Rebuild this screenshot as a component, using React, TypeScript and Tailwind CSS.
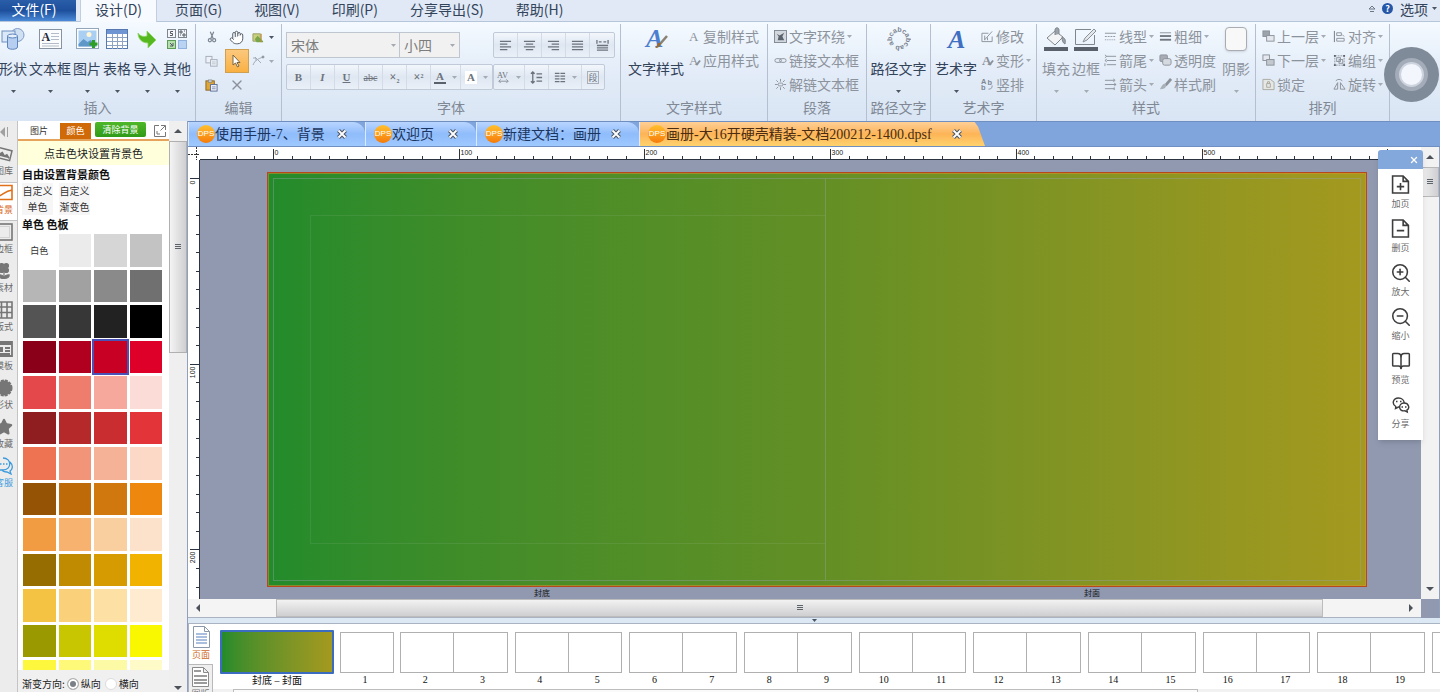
import React from "react";
import { Hand, X, ZoomIn, ZoomOut, BookOpen, Flower2, Star } from "lucide-react";

type Kids = { children?: React.ReactNode };

const MENU = ["页面(G)", "视图(V)", "印刷(P)", "分享导出(S)", "帮助(H)"];

const SWATCHES = [
  "#ffffff", "#ebebeb", "#d6d6d6", "#c3c3c3",
  "#b6b6b6", "#a1a1a1", "#8a8a8a", "#707070",
  "#545454", "#373737", "#222222", "#000000",
  "#8a0019", "#b1001f", "#c80024", "#df002a",
  "#e5484b", "#ef7d6d", "#f7a89c", "#fbdcd7",
  "#8e1e20", "#b6292b", "#c92d30", "#e33539",
  "#ee7353", "#f29477", "#f6b297", "#fcd9c6",
  "#955405", "#bf6a08", "#d0770d", "#ed870d",
  "#f19c42", "#f7b26f", "#f9cf9f", "#fce2ca",
  "#956d00", "#c08b00", "#d69b00", "#f2b300",
  "#f5c344", "#fad07a", "#fde1a4", "#feebd0",
  "#9a9a00", "#c8c600", "#dfdc00", "#f9f800",
  "#fdf83e", "#fef979", "#fdfaa6", "#fefbc8",
];
const SELECTED = 14;

function Svg({ s = 14, vb = 14, children, className = "" }: { s?: number; vb?: number; className?: string } & Kids) {
  return (
    <svg width={s} height={s} viewBox={`0 0 ${vb} ${vb}`} fill="none" stroke="#8b9199" className={`shrink-0 ${className}`} aria-hidden="true">
      {children}
    </svg>
  );
}

function Caret({ className = "text-[#4b5563]" }: { className?: string }) {
  return (
    <svg width="5" height="3" viewBox="0 0 5 3" className={`shrink-0 ${className}`} aria-hidden="true">
      <path d="M0 0h5L2.5 3z" fill="currentColor" />
    </svg>
  );
}

function Group({ label, width, children }: { label: string; width: string } & Kids) {
  return (
    <section className={`flex shrink-0 flex-col pt-[2px] ${width}`}>
      <div className="flex grow border-r border-[#b4c0cf]">
        <div className="flex min-w-0 grow flex-col">
          <div className="flex h-[72px]">{children}</div>
          <h2 className="text-center text-[14px] leading-[22px] text-[#7f8894]">{label}</h2>
        </div>
      </div>
    </section>
  );
}

function Big({ icon, label, caret = true, muted = false }: { icon: React.ReactNode; label: string; caret?: boolean; muted?: boolean }) {
  return (
    <button className={`flex shrink-0 flex-col items-center text-[14px] leading-5 ${muted ? "text-[#8d939c]" : "text-[#33435a]"}`}>
      <span className="flex h-[30px] items-center">{icon}</span>
      <span className="mt-1 whitespace-nowrap">{label}</span>
      {caret && <Caret className={muted ? "mt-3 text-[#a5abb3]" : "mt-3 text-[#4b5563]"} />}
    </button>
  );
}

function Small({ icon, label, caret = false }: { icon: React.ReactNode; label: string; caret?: boolean }) {
  return (
    <button className="flex h-6 items-center gap-[2px] whitespace-nowrap text-[14px] text-[#8d939c]">
      {icon}
      <span>{label}</span>
      {caret && <Caret className="text-[#a5abb3]" />}
    </button>
  );
}

function Tool({ label, width = "w-6", children, caret = false }: { label: string; width?: string; caret?: boolean } & Kids) {
  return (
    <button aria-label={label} className={`flex h-6 items-center justify-center gap-[6px] border-r border-[#d3dbe6] text-[#6d737c] last:border-r-0 ${width}`}>
      {children}
      {caret && <Caret className="text-[#a5abb3]" />}
    </button>
  );
}

function ToolBox({ children }: Kids) {
  return (
    <div className="flex rounded-[2px] border border-[#c0cad8] bg-linear-to-b from-[#f3f7fc] via-[#dfe7f2] to-[#eaf0f8]">{children}</div>
  );
}

/* ---------- ribbon icons ---------- */

const ShapeIcon = () => (
  <Svg s={24} vb={24}>
    <circle cx="16.500" cy="8" r="6.500" fill="#cfe0f3" stroke="#7f9cc6" />
    <rect x="1" y="4" width="13" height="11" fill="#dbe8f7" stroke="#6f90bf" />
    <path d="M6.500 9v11c0 3 10 3 10 0V9z" fill="#b6cff0" stroke="#5d84bd" />
    <ellipse cx="11.500" cy="9" rx="5" ry="2" fill="#e6f0fb" stroke="#5d84bd" />
  </Svg>
);
const TextBoxIcon = () => (
  <svg width="23" height="20" viewBox="0 0 23 20" aria-hidden="true">
    <rect x=".5" y=".5" width="22" height="19" fill="#fbfcfe" stroke="#8793a3" />
    <text x="2.500" y="12" fontSize="12" fontWeight="700" fontFamily="Liberation Serif, serif" fill="#1f2a3a">A</text>
    <path d="M12 4.500h8M12 7.500h8M12 10.500h8M3 14.500h17M3 17h17" stroke="#b3bcc8" />
  </svg>
);
const PictureIcon = () => (
  <svg width="23" height="22" viewBox="0 0 23 22" aria-hidden="true">
    <rect x=".5" y=".5" width="22" height="20" fill="#fff" stroke="#93a5ba" />
    <rect x="2.500" y="2.500" width="18" height="16" fill="#a9d0f3" />
    <circle cx="13" cy="6.500" r="2.500" fill="#fff6d8" />
    <path d="M2.500 16l5-5 4 3 3-2 6 4v2.500h-18z" fill="#5f97c9" />
    <path d="M17.500 12v8M13.500 16h8" stroke="#2f9e24" strokeWidth="3" />
  </svg>
);
const TableIcon = () => (
  <svg width="22" height="20" viewBox="0 0 22 20" aria-hidden="true">
    <rect x=".5" y=".5" width="21" height="19" fill="#fff" stroke="#5578ae" />
    <rect x="1" y="1" width="20" height="4" fill="#6f96d2" />
    <path d="M1 8.500h20M1 12.500h20M1 16.500h20M6.500 5v15M11.500 5v15M16.500 5v15" stroke="#8ea4c2" />
  </svg>
);
const ImportIcon = () => (
  <svg width="20" height="20" viewBox="0 0 20 20" aria-hidden="true">
    <path d="M1 4c2 3 5 4 9 3V2l9 9-8 8v-5C5 14 1 10 1 4z" fill="#55b81f" stroke="#8fd465" strokeWidth=".8" />
  </svg>
);
const OtherIcon = () => (
  <svg width="20" height="20" viewBox="0 0 20 20" aria-hidden="true">
    <g fill="#f4f6f9" stroke="#7d858f">
      <rect x=".5" y=".5" width="8" height="8" />
      <rect x="11.500" y=".5" width="8" height="8" />
      <rect x=".5" y="11.500" width="8" height="8" fill="#b6dfae" stroke="#5c9c55" />
      <rect x="11.500" y="11.500" width="8" height="8" fill="#b9d3f3" stroke="#8fb2df" />
    </g>
    <path d="M6 2.500H3.500v2H5.500v2H3M13 2h2v2h-2zM16 5h2v2h-2zM13 6h1M17 2h1M3 14l3 3M6 14v3H3" stroke="#555d66" fill="none" />
  </svg>
);
const CutIcon = () => (
  <Svg s={12}>
    <path d="M5 1l3.500 8M9 1L5.500 9" stroke="#7b8490" strokeWidth="1.400" />
    <circle cx="4.500" cy="10.800" r="1.800" stroke="#7b8490" strokeWidth="1.400" />
    <circle cx="9.500" cy="10.800" r="1.800" stroke="#7b8490" strokeWidth="1.400" />
  </Svg>
);
const CopyIcon = () => (
  <Svg s={13}>
    <rect x="1" y="1.500" width="6.500" height="7" fill="#eef2f7" stroke="#a3acb8" />
    <rect x="6" y="5" width="7" height="7" fill="#eef2f7" stroke="#a3acb8" />
    <path d="M7.500 7.500h4M7.500 9.500h4" stroke="#b9c1cb" />
  </Svg>
);
const PasteIcon = () => (
  <Svg s={13}>
    <rect x="1" y="2" width="9" height="10" fill="#dca63a" stroke="#8a6420" />
    <rect x="3.500" y="1" width="4" height="2.500" fill="#ccc" stroke="#777" strokeWidth=".6" />
    <rect x="6" y="6" width="7" height="7" fill="#f2f5fb" stroke="#596a95" />
    <path d="M7.500 8.500h4M7.500 10.500h4" stroke="#7d8cb4" />
  </Svg>
);
const BucketPic = () => (
  <Svg s={13}>
    <path d="M1 3h8v8H1z" fill="#c8cf7d" stroke="#9a9f62" />
    <path d="M3 9l3-4 6 6v1H5z" fill="#79a64a" stroke="none" />
    <path d="M10 3v9" stroke="#d48a3a" />
  </Svg>
);
const NodeIcon = () => (
  <Svg s={14}>
    <path d="M2 11c2-5 5-6 10-8M4 3l6 6M2 4h3v3" stroke="#a3abb6" />
    <circle cx="12" cy="3" r="1" fill="#a3abb6" />
  </Svg>
);
const TextStyleIcon = () => (
  <svg width="28" height="28" viewBox="0 0 28 28" aria-hidden="true">
    <text x="4" y="22" fontSize="26" fontWeight="700" fontStyle="italic" fontFamily="Liberation Serif, serif" fill="#4d7fcf">A</text>
    <path d="M25 11l-7 8" stroke="#8c8274" strokeWidth="2.500" />
    <path d="M19 18c-1 3-2 5-6 5 2-1 2-3 3-5z" fill="#9c6b2c" />
  </svg>
);
const ArtIcon = () => (
  <svg width="28" height="28" viewBox="0 0 28 28" aria-hidden="true">
    <text x="6" y="23" fontSize="26" fontWeight="700" fontStyle="italic" fontFamily="Liberation Serif, serif" fill="#3f6fc2">A</text>
  </svg>
);
const LetterA = ({ mark = false, bold = false }: { mark?: boolean; bold?: boolean }) => (
  <Svg s={13}>
    <text x="1" y="12" fontSize="14" stroke="none" fontWeight={bold ? 700 : 400} fontFamily="Liberation Serif, serif" fill="#8b9199">A</text>
    {mark && <path d="M13 7l-4 5" strokeWidth="2" />}
  </Svg>
);
const PathTextIcon = () => (
  <svg width="24" height="24" viewBox="0 0 24 24" aria-hidden="true">
    <g fontSize="7" fontFamily="Liberation Sans, sans-serif" fontWeight="700" fill="#7d8590" textAnchor="middle">
      {["a", "b", "c", "a", "b", "c", "a", "b", "c", "a", "b"].map((c, i) => (
        <text key={i} x="12" y="5" transform={`rotate(${i * 31 - 120} 12 12)`}>{c}</text>
      ))}
    </g>
  </svg>
);
const WrapIcon = () => (
  <Svg s={13}>
    <rect x=".5" y=".5" width="13" height="13" fill="#d3d8de" stroke="#7f8791" />
    <path d="M3 4l3 2 5-3-2 4 2 4H4l1-4z" fill="#5a626c" stroke="none" />
  </Svg>
);
const LinkIcon = () => (
  <Svg s={13}>
    <rect x="1" y="5" width="7" height="4" rx="2" />
    <rect x="6" y="5" width="7" height="4" rx="2" />
  </Svg>
);
const UnlinkIcon = () => (
  <Svg s={13}>
    <path d="M1 7h3M10 7h3M7 1v3M7 10v3M2.500 2.500l2 2M11.500 2.500l-2 2M2.500 11.500l2-2M11.500 11.500l-2-2" />
    <rect x="4.500" y="5.500" width="5" height="3" rx="1.500" />
  </Svg>
);
const EditIcon = () => (
  <Svg s={13}>
    <path d="M1 3.500h7M1 3.500v9h11V7M4 10.500L12 1.500M4 6v5M7 8v3" />
  </Svg>
);
const VertIcon = () => (
  <Svg s={13}>
    <g fontSize="8" stroke="none" fill="#7f8791" fontWeight="700" fontFamily="Liberation Sans, sans-serif">
      <text x="0" y="6">A</text><text x="7" y="7">b</text><text x="0" y="13">b</text>
    </g>
    <path d="M12 8c0 3-1 4-4 4" />
  </Svg>
);
const FillIcon = () => (
  <svg width="26" height="26" viewBox="0 0 26 26" aria-hidden="true">
    <path d="M4 12l8-7 8 6-8 8z" fill="#f3f4f6" stroke="#81878f" />
    <path d="M12 9V4c0-3 4-3 4 0v4M19 11c3 1 4 3 3 7-2-1-3-3-3-7z" fill="#9ba1a9" stroke="#81878f" />
    <rect x="1" y="21" width="24" height="4" fill="#5b616a" />
  </svg>
);
const StrokeIcon = () => (
  <svg width="26" height="26" viewBox="0 0 26 26" aria-hidden="true">
    <path d="M18 3.500H2.500v15h19V9" fill="none" stroke="#81878f" />
    <path d="M10 16l2-4 9-9 2 2-9 9z" fill="#e3e6ea" stroke="#8b9199" />
    <rect x="1" y="21" width="24" height="4" fill="#5b616a" />
  </svg>
);
const DashIcon = () => (
  <Svg s={13}><path d="M1 3.500h12" /><path d="M1 7h12" strokeDasharray="2 1" /><path d="M1 10.500h12" strokeDasharray="1 1" /></Svg>
);
const ThickIcon = () => (
  <Svg s={13}><path d="M1 3h12" /><path d="M1 6.500h12" strokeWidth="2" stroke="#6f767f" /><path d="M1 10.500h12" strokeWidth="2" stroke="#6f767f" /></Svg>
);
const TailIcon = () => (
  <Svg s={13}><path d="M3 2.500h10M3 7h10M3 11.500h10M1 1l2 1.500L1 4M3 5.500L1 7l2 1.500M1 10v3" /></Svg>
);
const HeadIcon = () => (
  <Svg s={13}><path d="M1 2.500h10M1 7h12M1 11.500h10M10 1l2 1.500L10 4M11 5.500L13 7l-2 1.500M11 10v3" /></Svg>
);
const AlphaIcon = () => (
  <Svg s={13}><rect x="1" y="1" width="8" height="7" rx="1" fill="#a8adb5" /><rect x="4" y="5" width="9" height="7" rx="2" fill="#d5dae1" /></Svg>
);
const BrushIcon = () => (
  <Svg s={13}><path d="M13 1L7 8" strokeWidth="3" /><path d="M7 6c-3 0-4 3-6 6 4 0 6-1 7-4z" fill="#aab0b8" stroke="none" /></Svg>
);
const LayerIcon = ({ down = false }: { down?: boolean }) => (
  <Svg s={13}>
    <rect x="1" y="1" width="7" height="6" fill={down ? "#e5e9ef" : "#9da3ab"} />
    <rect x="5" y="6" width="8" height="6" fill={down ? "#c3c8cf" : "#e5e9ef"} />
  </Svg>
);
const LockIcon = () => (
  <Svg s={13}><path d="M1 1.500h8l4 3v8H1z" fill="#e5e7e4" stroke="#aaa9a0" /><path d="M5 6h4v4H5zM6 6V4h2v2" stroke="#aaa9a0" /></Svg>
);
const AlignObjIcon = () => (
  <Svg s={13}><path d="M1.500 1v12" stroke="#6f767f" /><path d="M4 3h5v3H4zM4 9h8v3H4zM10 5l2 2" /></Svg>
);
const GroupIcon = () => (
  <Svg s={13}>
    <rect x="2" y="2" width="10" height="10" strokeDasharray="2 1" />
    <rect x="4" y="4" width="4" height="4" /><rect x="6.500" y="6" width="4" height="4" />
    <path d="M1 1h2v2H1zM11 1h2v2h-2zM1 11h2v2H1zM11 11h2v2h-2z" fill="#5c636c" stroke="none" />
  </Svg>
);
const RotateIcon = () => (
  <Svg s={13}><path d="M1 12l4-7v7zM8 12V5l5 7zM3 3c2-2 5-2 7 0" /></Svg>
);
const Lines = ({ d }: { d: string }) => (
  <Svg s={13}><path d={d} stroke="#6d737c" strokeWidth="1.400" /></Svg>
);

/* ---------- document tabs ---------- */

function DpsLogo() {
  return (
    <span className="flex h-[18px] w-[18px] shrink-0 items-center justify-center rounded-full bg-linear-to-b from-[#ffc02e] to-[#f57a06] font-['Liberation_Sans',sans-serif] text-[8px] text-white">
      DPS
    </span>
  );
}

function DocTab({ title, width, active = false }: { title: string; width: string; active?: boolean }) {
  const look = active
    ? "bg-linear-to-b from-[#ffcf95] via-[#fdb457] to-[#ffd26e] text-[#4a2d12] pr-[23px] [clip-path:polygon(0_0,97%_0,98%_20%,100%_100%,0_100%)]"
    : "bg-linear-to-b from-[#b9d5ff] via-[#8fbcfb] to-[#9ec8ff] text-[#1b355e] pr-[18px] rounded-tr-[12px]";
  return (
    <div className={`flex h-6 shrink-0 items-center border-l border-[#dceaff] pl-2 ${width} ${look}`}>
      <DpsLogo />
      <a href="#doc" className="whitespace-nowrap font-['Liberation_Serif','Noto_Sans_CJK_SC',serif] text-[14px]">{title}</a>
      <button aria-label="关闭" className="ml-auto flex h-[10px] w-[10px] items-center justify-center">
        <svg width="10" height="10" viewBox="0 0 10 10" aria-hidden="true">
          <path d="M1.500 1.500l7 7M8.500 1.500l-7 7" stroke="#4d5868" strokeWidth="4" />
          <path d="M1.500 1.500l7 7M8.500 1.500l-7 7" stroke="#fff" strokeWidth="1.800" />
        </svg>
      </button>
    </div>
  );
}

/* ---------- rulers ---------- */

const STEP = 18.57;

function HRuler() {
  return (
    <svg className="h-[13px] min-w-0 grow border-b border-[#2c3340] bg-white" aria-hidden="true">
      {Array.from({ length: 90 }, (_, k) => k - 3).map((i) => {
        const x = Math.round(73 + i * STEP) + 0.5;
        const major = i >= 0 && i % 10 === 0;
        return (
          <g key={i}>
            <path d={`M${x} ${major ? 2 : 9}V13`} stroke="#2c3340" />
            {major && <text x={x + 1} y="8" fontSize="7" fontFamily="Liberation Sans, sans-serif" fill="#222">{i * 10}</text>}
          </g>
        );
      })}
    </svg>
  );
}

function VRuler() {
  return (
    <svg className="h-full w-3 shrink-0 border-r border-[#2c3340] bg-white" aria-hidden="true">
      {Array.from({ length: 60 }, (_, i) => {
        const y = Math.round(18 + i * STEP) + 0.5;
        const major = i % 10 === 0;
        return (
          <g key={i}>
            <path d={`M${major ? 2 : 8} ${y}H12`} stroke="#2c3340" />
            {major && (
              <text transform={`translate(7 ${y + 2}) rotate(-90)`} textAnchor="end" fontSize="7" fontFamily="Liberation Sans, sans-serif" fill="#222">{i * 10}</text>
            )}
          </g>
        );
      })}
    </svg>
  );
}

function Arrow({ dir }: { dir: "up" | "down" | "left" | "right" }) {
  const d = { up: "M0 6h8L4 2z", down: "M0 2h8L4 6z", left: "M6 0v8L2 4z", right: "M2 0v8l4-4z" }[dir];
  return (
    <svg width="8" height="8" viewBox="0 0 8 8" aria-hidden="true"><path d={d} fill="#4d525a" /></svg>
  );
}

function Grip() {
  return (
    <svg width="6" height="6" viewBox="0 0 6 6" aria-hidden="true"><path d="M0 .5h6M0 2.500h6M0 4.500h6" stroke="#5d636b" /></svg>
  );
}

/* ---------- side rail ---------- */

const grey = "#767676";
const RAIL: { label: string; icon: React.ReactNode }[] = [
  { label: "图库", icon: <Svg s={18} vb={18}><g stroke={grey} strokeWidth="1.500" transform="rotate(14 9 9)"><rect x="1" y="4" width="15" height="10" /><path d="M3 12l4-4 3 3 2-2 3 3" fill={grey} /></g></Svg> },
  { label: "背景", icon: <Svg s={18} vb={18}><path d="M1 1.500h16v14H1zM1 13c7-1 8-6 16-7" stroke="#e0701a" strokeWidth="1.600" /></Svg> },
  { label: "边框", icon: <Svg s={18} vb={18}><rect x="1" y="1" width="16" height="16" stroke={grey} strokeWidth="1.600" /><rect x="3.500" y="3.500" width="11" height="11" stroke="#bbb" strokeDasharray="1 1" /></Svg> },
  { label: "素材", icon: <Flower2 size={18} color={grey} fill={grey} strokeWidth={1.5} /> },
  { label: "版式", icon: <Svg s={18} vb={18}><path d="M1 1h16v16H1zM1 6h16M1 11.500h16M6.500 1v16M12 1v16" stroke={grey} strokeWidth="1.600" /></Svg> },
  { label: "模板", icon: <Svg s={18} vb={18}><path d="M1 2h16v14H1zM1 4h16M10 8h5M10 11h5M4 14h11" stroke={grey} strokeWidth="1.800" /><rect x="3" y="7" width="5" height="5" fill={grey} stroke="none" /></Svg> },
  { label: "形状", icon: <Svg s={18} vb={18}><circle cx="9" cy="9" r="7.500" fill={grey} stroke={grey} strokeDasharray="3 1" strokeWidth="2" /></Svg> },
  { label: "收藏", icon: <Star size={18} color={grey} fill={grey} /> },
  { label: "客服", icon: <Svg s={18} vb={18}><path d="M8 1c9 0 9 12 0 12H5l-3 2V10M15 5c4 4 2 8 0 9l1 3-4-2c-2 0-4 0-5-2" stroke="#3b9bdc" strokeWidth="1.300" /><path d="M5 7h1.500M8 7h1.500M11 7h1.500" stroke="#3b9bdc" strokeWidth="1.500" /></Svg> },
];

function Rail() {
  return (
    <nav className="flex w-[18px] shrink-0 flex-col overflow-hidden border-r border-[#c4c4c4] bg-[#ececec]">
      <button aria-label="收起" className="flex h-[22px] shrink-0 items-center">
        <svg width="9" height="10" viewBox="0 0 9 10" aria-hidden="true"><path d="M5 0v10L0 5z" fill="#a0a0a0" /><path d="M7.500 0v10" stroke="#a0a0a0" /></svg>
      </button>
      {RAIL.map(({ label, icon }) => {
        const tone = label === "背景" ? "bg-white text-[#d8651a] border-[#c4c4c4]" : label === "客服" ? "text-[#3b9bdc] border-transparent" : "text-[#6b6b6b] border-transparent";
        return (
          <button key={label} className={`-ml-[5px] flex h-[39px] w-[23px] shrink-0 flex-col items-start border-y text-[9px] leading-[14px] ${tone}`}>
            <span className="flex h-[20px] items-center">{icon}</span>
            <span className="whitespace-nowrap">{label}</span>
          </button>
        );
      })}
    </nav>
  );
}

function SidePanel() {
  return (
    <aside className="flex w-[151px] shrink-0 flex-col bg-white">
      <div className="flex h-5 shrink-0 items-end border-b-2 border-[#e5a35c] text-[9px]">
        <button className="h-4 w-[42px] text-[#333]">图片</button>
        <button className="h-4 w-[31px] bg-[#d06a08] text-white">颜色</button>
        <button className="ml-1 mb-[2px] h-[15px] w-[51px] rounded-[2px] bg-linear-to-b from-[#4fb828] to-[#2f9a18] leading-[14px] text-white">清除背景</button>
        <button aria-label="展开" className="mb-[2px] ml-2">
          <Svg s={12} vb={12}><path d="M5 .5H.5v11h11V7M7 .5h4.500V5M11 1L6.500 5.500M3 6v3h3" stroke="#777" /></Svg>
        </button>
      </div>
      <p className="h-6 shrink-0 bg-[#ffffdc] text-center text-[11px] leading-6 text-[#222]">点击色块设置背景色</p>
      <div className="flex min-h-0 grow flex-col overflow-hidden pl-1">
        <h3 className="text-[11px] font-bold leading-[18px] text-[#111]">自由设置背景颜色</h3>
        <div className="flex gap-[6px] text-[10px] leading-4 text-[#333]">
          <button className="w-[31px] bg-[#f6f6f6]">自定义<br />单色</button>
          <button className="w-[31px] bg-[#f6f6f6]">自定义<br />渐变色</button>
        </div>
        <h3 className="mt-[2px] text-[11px] font-bold leading-[14px] text-[#111]">单色 色板</h3>
        <div className="mt-[3px] ml-px grid w-[139px] shrink-0 grid-cols-4 gap-[3px]">
          {SWATCHES.map((c, i) => (
            <button
              key={i}
              aria-label={i === 0 ? undefined : c}
              style={{ backgroundColor: c }}
              className={`aspect-square text-[9px] text-[#333] ${i === SELECTED ? "outline-2 outline-[#4a52b5]" : ""}`}
            >
              {i === 0 ? "白色" : ""}
            </button>
          ))}
        </div>
      </div>
      <fieldset className="flex h-[22px] shrink-0 items-center bg-[#f0f0f0] pt-2 pl-1 text-[10px] leading-3 text-[#222]">
        <span className="mr-[2px] whitespace-nowrap">渐变方向:</span>
        <label className="flex items-center gap-[2px] whitespace-nowrap">
          <input type="radio" name="dir" defaultChecked className="h-3 w-3 appearance-none rounded-full border border-[#b5b5b5] bg-white checked:bg-[#7b8088] checked:inset-ring-2 checked:inset-ring-white" />
          纵向
        </label>
        <label className="ml-1 flex items-center gap-[2px] whitespace-nowrap">
          <input type="radio" name="dir" className="h-3 w-3 appearance-none rounded-full border border-[#dcdcdc] bg-white" />
          横向
        </label>
      </fieldset>
    </aside>
  );
}

/* ---------- floating page tools ---------- */

const PageGlyph = ({ plus = false }: { plus?: boolean }) => (
  <Svg s={19} vb={18}>
    <path d="M1.500 1h10l5 5v11h-15zM11.500 1v5h5" stroke="#3d3d3d" strokeWidth="1.500" />
    <path d={plus ? "M5.500 11h7M9 7.500v7" : "M5.500 11h7"} stroke="#3d3d3d" strokeWidth="1.500" />
  </Svg>
);
const ShareGlyph = () => (
  <Svg s={18} vb={18}>
    <path d="M6.500 2c7 0 8 9 0 9l-3 1.500.3-2C-.5 8 1 2 6.500 2z" stroke="#3d3d3d" strokeWidth="1.400" />
    <path d="M12 7c5 0 6 5.500 3 7l.3 2-2.300-1.200C6 16 6 7 12 7z" fill="#fff" stroke="#3d3d3d" strokeWidth="1.400" />
    <path d="M4 5.500h1.500M8 5.500h1.500M9.500 11H11M13 11h1.500" stroke="#3d3d3d" strokeWidth="1.500" />
  </Svg>
);

const TOOLS = [
  { label: "加页", icon: <PageGlyph plus /> },
  { label: "删页", icon: <PageGlyph /> },
  { label: "放大", icon: <ZoomIn size={22} strokeWidth={1.7} /> },
  { label: "缩小", icon: <ZoomOut size={22} strokeWidth={1.7} /> },
  { label: "预览", icon: <BookOpen size={20} strokeWidth={1.8} /> },
  { label: "分享", icon: <ShareGlyph /> },
];

function Palette() {
  return (
    <div className="absolute top-[29px] right-[17px] flex w-[45px] flex-col overflow-hidden rounded-t-[3px] bg-white pb-1 shadow-md">
      <button aria-label="关闭" className="flex h-[19px] items-center justify-end bg-[#83a9dc] pr-1 text-white"><X size={10} strokeWidth={3} /></button>
      <div className="flex flex-col pt-[3px]">
        {TOOLS.map(({ label, icon }) => (
          <button key={label} className="flex h-[44px] flex-col items-center text-[9px] leading-[14px] text-[#6b6b6b]">
            <span className="flex h-[25px] items-center text-[#3d3d3d]">{icon}</span>
            {label}
          </button>
        ))}
      </div>
    </div>
  );
}

/* ---------- page strip ---------- */

function Spread({ a, b }: { a: number; b: number }) {
  return (
    <div className="flex min-w-0 flex-1 flex-col">
      <div className="grid h-[41px] grid-cols-2 divide-x divide-[#b0b0b0] border border-[#b0b0b0] bg-white"><div /><div /></div>
      <div className="grid grid-cols-2 gap-[7px] text-center leading-[14px]"><span>{a}</span><span>{b}</span></div>
    </div>
  );
}

function PageStrip() {
  return (
    <section className="flex h-[69px] shrink-0 border-t border-[#a9b3c2] bg-white">
      <div className="flex w-[25px] shrink-0 flex-col overflow-hidden border-l border-[#a9b3c2]">
        <button className="flex h-10 shrink-0 flex-col items-center pt-[2px] text-[9px] leading-[14px] text-[#cf6a1e]">
          <svg width="17" height="22" viewBox="0 0 17 22" aria-hidden="true"><path d="M.5.500h11l5 5v16H.5zM11.500.500v5h5" fill="#fff" stroke="#8a98ab" /><path d="M3 8h11M3 11h11M3 14h11M3 17h11" stroke="#8fa9d3" strokeWidth="1.500" /></svg>
          页面
        </button>
        <button className="flex h-10 shrink-0 flex-col items-center border-t border-r border-[#b9b9b9] bg-[#efefef] pt-[2px] text-[9px] leading-[14px] text-[#777]">
          <svg width="17" height="20" viewBox="0 0 17 20" aria-hidden="true"><path d="M.5.500h11l5 5v14H.5zM11.500.500v5h5" fill="#fff" stroke="#8b8b8b" /><path d="M2 4h7M2 9h13M2 13h13M2 16h13" stroke="#9b9b9b" strokeWidth="2" /></svg>
          图版
        </button>
      </div>
      <div className="flex min-w-0 grow flex-col">
        <div className="flex h-[65px] gap-[6px] overflow-hidden pt-[6px] pl-[7px] font-['Liberation_Serif','Noto_Sans_CJK_SC',serif] text-[10px] text-[#111]">
          <div className="flex w-[114px] shrink-0 flex-col text-center">
            <button aria-label="封底 - 封面" className="h-11 rounded-[1px] border-2 border-[#3b6cc0] bg-linear-to-r from-[#228b2b] to-[#a4991f]" />
            <span className="leading-[13px]">封底 – 封面</span>
          </div>
          <div className="flex w-[54px] shrink-0 flex-col pt-[2px] text-center">
            <div className="h-[41px] border border-[#b0b0b0] bg-white" />
            <span className="pr-1 leading-[14px]">1</span>
          </div>
          <div className="flex min-w-0 grow gap-[7px] pt-[2px]">
            {[2, 4, 6, 8, 10, 12, 14, 16, 18].map((n) => <Spread key={n} a={n} b={n + 1} />)}
            <div className="h-[41px] w-2 shrink-0 border border-r-0 border-[#b0b0b0]" />
          </div>
        </div>
        <div className="flex grow bg-[#f1f1f1] pr-[242px] pl-5"><div className="grow border border-b-0 border-[#bdbdbd] bg-[#fafafa]" /></div>
      </div>
    </section>
  );
}

/* ---------- ribbon ---------- */

function MenuBar() {
  return (
    <header className="flex h-[22px] shrink-0 border-b border-[#b5c6db] bg-[#e0e9f5] text-[14px] leading-4 text-[#33435a]">
      <button className="h-[21px] w-[76px] bg-linear-to-b from-[#2a5ea8] via-[#1d4f9c] to-[#4b8ad8] pr-2 pb-1 text-white">文件(F)</button>
      <button className="ml-1 h-[22px] w-[77px] border-x border-[#c0cede] bg-[#f7fbff] pb-[5px]">设计(D)</button>
      <nav className="ml-[2px] flex">
        {MENU.map((m) => <button key={m} className="px-4 pb-1 whitespace-nowrap">{m}</button>)}
      </nav>
      <div className="ml-auto flex items-center gap-[6px] pr-[3px] pb-1">
        <button aria-label="折叠功能区"><Svg s={8} vb={8}><path d="M1 4l3-3 3 3zM2 6.500h4" stroke="#6b7686" /></Svg></button>
        <button aria-label="帮助" className="h-[11px] w-[11px] rounded-full bg-[#2457a8] text-[9px] font-bold leading-[11px] text-white">?</button>
        <button className="ml-[1px] flex items-center gap-1">选项<Caret /></button>
      </div>
    </header>
  );
}

function Ribbon() {
  const sel = "h-full w-full appearance-none bg-transparent pl-1 text-[14px] text-[#7d7d7d] outline-none";
  return (
    <div className="relative flex h-[99px] shrink-0 overflow-hidden bg-linear-to-b from-[#f4faff] via-[#e3ecf8] to-[#d9e5f4]">
      <Group label="插入" width="w-[196px]">
        <div className="-ml-px flex gap-[2px]">
          <Big icon={<ShapeIcon />} label="形状" />
          <Big icon={<TextBoxIcon />} label="文本框" />
          <Big icon={<PictureIcon />} label="图片" />
          <Big icon={<TableIcon />} label="表格" />
          <Big icon={<ImportIcon />} label="导入" />
          <Big icon={<OtherIcon />} label="其他" />
        </div>
      </Group>
      <Group label="编辑" width="w-[86px]">
        <div className="mt-px ml-[3px] grid h-[72px] grid-cols-[25px_25px_27px] grid-rows-3 place-items-center">
          <button aria-label="剪切"><CutIcon /></button>
          <button aria-label="抓手"><Hand size={15} strokeWidth={1.6} color="#555d68" fill="#fff" /></button>
          <button aria-label="填充图" className="flex items-center gap-1"><BucketPic /><Caret /></button>
          <button aria-label="复制"><CopyIcon /></button>
          <button aria-label="选择" className="flex h-6 w-6 items-center justify-center border border-[#d0a04e] bg-linear-to-b from-[#fcc87c] to-[#f9b040]">
            <svg width="9" height="14" viewBox="0 0 9 14" aria-hidden="true"><path d="M1 1v10l2.500-2 2 4 1.500-1-2-3.500h3z" fill="#fff" stroke="#7a6440" /></svg>
          </button>
          <button aria-label="节点" className="flex items-center gap-1"><NodeIcon /><Caret className="text-[#a5abb3]" /></button>
          <button aria-label="粘贴"><PasteIcon /></button>
          <button aria-label="删除"><X size={16} color="#8b929c" /></button>
        </div>
      </Group>
      <Group label="字体" width="w-[339px]">
        <div className="flex flex-col gap-[6px] pt-2 pl-1">
          <div className="flex">
            <div className="flex h-[26px] w-[114px] items-center border border-[#bfc6cf] bg-[#f1f1f1] pr-[3px]">
              <select aria-label="字体" className={sel}><option>宋体</option></select><Caret className="text-[#a5abb3]" />
            </div>
            <div className="-ml-px mr-[33px] flex h-[26px] w-[61px] items-center border border-[#bfc6cf] bg-[#f1f1f1] pr-1">
              <select aria-label="字号" className={sel}><option>小四</option></select><Caret className="text-[#a5abb3]" />
            </div>
            <ToolBox>
              <Tool label="左对齐"><Lines d="M1 2.500h12M1 5.500h8M1 8.500h12M1 11.500h8" /></Tool>
              <Tool label="居中"><Lines d="M1 2.500h12M3 5.500h8M1 8.500h12M3 11.500h8" /></Tool>
              <Tool label="右对齐"><Lines d="M1 2.500h12M5 5.500h8M1 8.500h12M5 11.500h8" /></Tool>
              <Tool label="两端对齐"><Lines d="M1 2.500h12M1 5.500h12M1 8.500h12M1 11.500h12" /></Tool>
              <Tool label="分散"><Lines d="M1 1v4M13 1v4M3 3h3M8 3h3M1 7h12M1 9.500h12M1 12h12" /></Tool>
            </ToolBox>
          </div>
          <div className="flex font-['Liberation_Serif',serif] text-[11px]">
            <ToolBox>
              <Tool label="加粗"><b>B</b></Tool>
              <Tool label="斜体"><b className="italic">I</b></Tool>
              <Tool label="下划线"><b className="underline">U</b></Tool>
              <Tool label="删除线"><span className="text-[10px] line-through">abc</span></Tool>
              <Tool label="下标"><b className="text-[12px]">×<sub className="text-[6px]">2</sub></b></Tool>
              <Tool label="上标"><b className="text-[12px]">×<sup className="text-[6px]">2</sup></b></Tool>
              <Tool label="文字颜色" width="w-[30px]" caret><b className="border-b-2 border-[#5b616a] px-[2px] leading-[11px]">A</b></Tool>
              <Tool label="底色" width="w-[31px]" caret><b className="bg-white px-[2px] leading-[13px]">A</b></Tool>
            </ToolBox>
            <ToolBox>
              <Tool label="字距" width="w-[31px]" caret>
                <Svg s={13}><text x="0" y="7" fontSize="9" stroke="none" fill="#6d737c" fontFamily="Liberation Serif, serif">AV</text><path d="M2 11h10M4 9l-2 2 2 2M10 9l2 2-2 2" /></Svg>
              </Tool>
              <Tool label="行距"><Lines d="M3 1v12M1 3l2-2 2 2M1 11l2 2 2-2M7 3h6M7 7h6M7 11h6" /></Tool>
              <Tool label="分栏" width="w-[33px]" caret><Lines d="M2 2.500h5M8 2.500h5M2 5.500h5M8 5.500h5M2 8.500h5M8 8.500h5M2 11.500h5M8 11.500h5" /></Tool>
              <Tool label="段落" width="w-[22px]"><span className="border border-[#a9afb8] font-['Noto_Sans_CJK_SC'] text-[9px] leading-[11px]">段</span></Tool>
            </ToolBox>
          </div>
        </div>
      </Group>
      <Group label="文字样式" width="w-[147px]">
        <div className="ml-[7px] flex gap-1">
          <Big icon={<TextStyleIcon />} label="文字样式" caret={false} />
          <div className="flex flex-col">
            <Small icon={<LetterA />} label="复制样式" />
            <Small icon={<LetterA mark />} label="应用样式" />
          </div>
        </div>
      </Group>
      <Group label="段落" width="w-[99px]">
        <div className="ml-[6px] flex flex-col">
          <Small icon={<WrapIcon />} label="文字环绕" caret />
          <Small icon={<LinkIcon />} label="链接文本框" />
          <Small icon={<UnlinkIcon />} label="解链文本框" />
        </div>
      </Group>
      <Group label="路径文字" width="w-[64px]">
        <div className="mx-auto flex"><Big icon={<PathTextIcon />} label="路径文字" /></div>
      </Group>
      <Group label="艺术字" width="w-[106px]">
        <div className="ml-1 flex gap-1">
          <Big icon={<ArtIcon />} label="艺术字" />
          <div className="flex flex-col">
            <Small icon={<EditIcon />} label="修改" />
            <Small icon={<LetterA bold mark />} label="变形" caret />
            <Small icon={<VertIcon />} label="竖排" />
          </div>
        </div>
      </Group>
      <Group label="样式" width="w-[219px]">
        <div className="ml-[5px] flex">
          <div className="flex gap-[2px]">
            <Big icon={<FillIcon />} label="填充" muted />
            <Big icon={<StrokeIcon />} label="边框" muted />
          </div>
          <div className="ml-1 flex flex-col">
            <Small icon={<DashIcon />} label="线型" caret />
            <Small icon={<TailIcon />} label="箭尾" caret />
            <Small icon={<HeadIcon />} label="箭头" caret />
          </div>
          <div className="ml-[5px] flex flex-col">
            <Small icon={<ThickIcon />} label="粗细" caret />
            <Small icon={<AlphaIcon />} label="透明度" />
            <Small icon={<BrushIcon />} label="样式刷" />
          </div>
          <div className="ml-[6px] flex">
            <Big icon={<span className="h-6 w-[22px] rounded-[4px] border border-[#a9adb3] bg-[#f8f8f8] shadow-sm" />} label="阴影" muted />
          </div>
        </div>
      </Group>
      <Group label="排列" width="w-[134px]">
        <div className="ml-[6px] flex">
          <div className="flex flex-col">
            <Small icon={<LayerIcon />} label="上一层" caret />
            <Small icon={<LayerIcon down />} label="下一层" caret />
            <Small icon={<LockIcon />} label="锁定" />
          </div>
          <div className="ml-[7px] flex flex-col">
            <Small icon={<AlignObjIcon />} label="对齐" caret />
            <Small icon={<GroupIcon />} label="编组" caret />
            <Small icon={<RotateIcon />} label="旋转" caret />
          </div>
        </div>
      </Group>
      <button aria-label="辅助按钮" className="absolute top-[25px] right-[1px] flex h-[55px] w-[55px] items-center justify-center rounded-full bg-[#7f8b98]">
        <span className="flex h-[33px] w-[33px] items-center justify-center rounded-full bg-[#a3acb8]">
          <span className="h-[25px] w-[25px] rounded-full border-2 border-[#cdd4df] bg-[#f3f6fc]" />
        </span>
      </button>
    </div>
  );
}

function Workspace() {
  return (
    <div className="flex min-h-0 grow">
      <div className="flex min-w-0 grow flex-col">
        <div className="flex shrink-0">
          <svg width="12" height="13" viewBox="0 0 12 13" className="shrink-0 bg-white" aria-hidden="true"><path d="M0 7.500h12M8.500 0v13" stroke="#333" strokeDasharray="2 1" /></svg>
          <HRuler />
        </div>
        <div className="flex min-h-0 grow">
          <VRuler />
          <div className="flex min-w-0 grow flex-col bg-[#9099b0] pt-3 pr-[54px] pl-[67px]">
            <div className="flex grow border border-[#b8471c] bg-linear-to-r from-[#228b2b] via-[#628f25] to-[#a4991f] p-[5px] inset-ring inset-ring-[#e0912c]/50">
              <div className="grid grow grid-cols-[553fr_534fr] divide-x divide-gray-400/40 border border-gray-400/40">
                <div className="py-9 pl-9"><div className="h-full border border-r-0 border-gray-300/10" /></div>
                <div />
              </div>
            </div>
            <div className="grid h-3 shrink-0 grid-cols-2 text-center text-[8px] leading-[11px] text-[#111]"><span>封底</span><span>封面</span></div>
          </div>
        </div>
        <div className="flex h-[19px] shrink-0 items-center border-b border-[#a9b3c2] bg-[#f4f4f4] px-[6px]">
          <button aria-label="向左"><Arrow dir="left" /></button>
          <div className="mr-[84px] ml-[74px] flex h-[18px] grow items-center justify-center border border-[#bcbcbc] bg-linear-to-b from-[#f2f2f2] to-[#cfcfd2]"><Grip /></div>
          <button aria-label="向右"><Arrow dir="right" /></button>
        </div>
      </div>
      <div className="flex w-[19px] shrink-0 flex-col items-center border-r border-[#8ea0bb] bg-[#f2f2f2]">
        <button aria-label="向上" className="flex h-5 items-center"><Arrow dir="up" /></button>
        <div className="flex h-[30px] w-full items-center justify-center border border-[#b8b8b8] bg-linear-to-r from-[#f0f0f0] to-[#cfcfd2]"><Grip /></div>
        <button aria-label="向下" className="mt-auto flex h-5 items-center"><Arrow dir="down" /></button>
        <div className="h-[19px] w-full bg-[#9099b0]" />
      </div>
    </div>
  );
}

export default function App() {
  return (
    <div className="flex h-screen flex-col overflow-hidden bg-[#dde8f5] font-['Noto_Sans_CJK_SC',sans-serif]">
      <MenuBar />
      <Ribbon />
      <main className="relative flex min-h-0 grow">
        <Rail />
        <SidePanel />
        <div className="flex w-[18px] shrink-0 flex-col items-center bg-[#efefef]">
          <button aria-label="向上" className="flex h-5 items-center"><Arrow dir="up" /></button>
          <div className="flex h-[212px] w-full items-center justify-center border border-[#b0b0b0] bg-linear-to-r from-[#f4f4f4] to-[#cfcfd2]"><Grip /></div>
          <button aria-label="向下" className="mt-auto flex h-2 items-center"><Arrow dir="down" /></button>
        </div>
        <div className="flex min-w-0 grow flex-col border-l border-[#8ea0bb]">
          <div className="flex h-[26px] shrink-0 border-y border-[#6f8fc0] bg-[#7fa5dc]">
            <DocTab title="使用手册-7、背景" width="w-[177px]" />
            <DocTab title="欢迎页" width="w-[111px]" />
            <DocTab title="新建文档：画册" width="w-[163px]" />
            <DocTab title="画册-大16开硬壳精装-文档200212-1400.dpsf" width="w-[346px]" active />
          </div>
          <Workspace />
          <div className="flex h-[5px] shrink-0 items-center justify-center bg-[#dde8f5]"><Caret /></div>
          <PageStrip />
        </div>
        <Palette />
      </main>
    </div>
  );
}
